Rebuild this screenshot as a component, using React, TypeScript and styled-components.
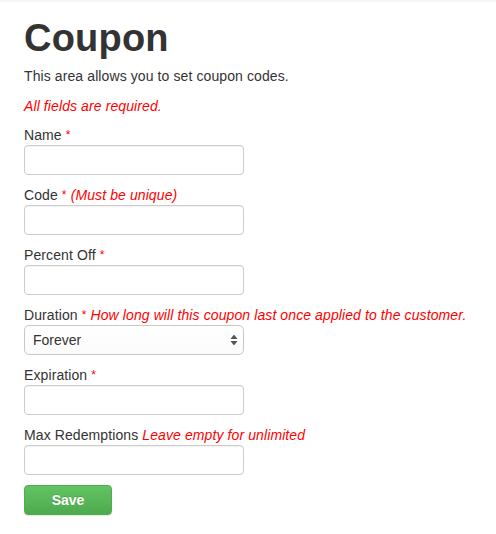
import React from "react";
import styled, { createGlobalStyle } from "styled-components";

const Global = createGlobalStyle`
  html, body { margin: 0; padding: 0; background: #fff; }
  body {
    font-family: "Liberation Sans", Arial, Helvetica, sans-serif;
    font-size: 14px;
    line-height: 20px;
    color: #333;
    letter-spacing: 0.1px;
  }
  * { box-sizing: border-box; }
`;

const Page = styled.div`
  min-height: 534px;
  padding: 0 24px;
  border-top: 2px solid #f6f6f6;
`;

const Title = styled.h1`
  margin: 16px 0 6px;
  font-size: 38px;
  line-height: 1.1;
  font-weight: 700;
  color: #333;
  letter-spacing: 0.2px;
`;

const Text = styled.p<{ $note?: boolean }>`
  margin: 0 0 ${(p) => (p.$note ? "9px" : "10px")};
  color: ${(p) => (p.$note ? "#f00" : "#333")};
  font-style: ${(p) => (p.$note ? "italic" : "normal")};
`;

const Form = styled.form`
  display: flex;
  flex-direction: column;
  gap: 10px;
`;

const Group = styled.div`
  display: flex;
  flex-direction: column;
`;

const Label = styled.label`
  display: block;
  height: 20px;
  font-weight: 400;
  white-space: nowrap;
`;

const Req = styled.span`
  color: #f00;
  font-size: 12px;
  vertical-align: 1px;
`;

const Hint = styled.em`
  color: #f00;
  font-style: italic;
`;

const Input = styled.input`
  width: 220px;
  height: 30px;
  padding: 5px 10px;
  border: 1px solid #ccc;
  border-radius: 4px;
  background: #fff;
  box-shadow: inset 0 1px 1px rgba(0, 0, 0, 0.05);
  font: inherit;
  outline: none;
`;

const SelectWrap = styled.div`
  position: relative;
  width: 220px;
  height: 30px;
`;

const Select = styled.select`
  appearance: none;
  -webkit-appearance: none;
  width: 220px;
  height: 30px;
  padding: 0 24px 0 8px;
  border: 1px solid #c8c8c8;
  border-radius: 5px;
  background: linear-gradient(#ffffff, #fbfbfb);
  font: inherit;
  color: #333;
  outline: none;
`;

const Arrows = styled.svg`
  position: absolute;
  right: 6px;
  top: 9px;
  pointer-events: none;
`;

const Save = styled.button`
  width: 88px;
  height: 30px;
  border: 1px solid #4cae4c;
  border-radius: 4px;
  background: linear-gradient(#62c462, #4fa94f);
  color: #fff;
  font: inherit;
  font-weight: 700;
  text-shadow: 0 -1px 0 rgba(0, 0, 0, 0.15);
  box-shadow: 0 1px 1px rgba(0, 0, 0, 0.1);
  padding: 0;
`;

export default function App() {
  return (
    <>
      <Global />
      <Page>
        <Title>Coupon</Title>
        <Text>This area allows you to set coupon codes.</Text>
        <Text $note>All fields are required.</Text>
        <Form onSubmit={(e) => e.preventDefault()}>
          <Group>
            <Label>
              Name <Req>*</Req>
            </Label>
            <Input type="text" />
          </Group>
          <Group>
            <Label>
              Code <Req>*</Req> <Hint>(Must be unique)</Hint>
            </Label>
            <Input type="text" />
          </Group>
          <Group>
            <Label>
              Percent Off <Req>*</Req>
            </Label>
            <Input type="text" />
          </Group>
          <Group>
            <Label>
              Duration <Req>*</Req>{" "}
              <Hint>How long will this coupon last once applied to the customer.</Hint>
            </Label>
            <SelectWrap>
              <Select defaultValue="forever">
                <option value="forever">Forever</option>
                <option value="once">Once</option>
                <option value="repeating">Repeating</option>
              </Select>
              <Arrows width="8" height="12" viewBox="0 0 8 12">
                <path d="M4 0.5 L7.5 5 L0.5 5 Z" fill="#555" />
                <path d="M4 11.5 L7.5 7 L0.5 7 Z" fill="#555" />
              </Arrows>
            </SelectWrap>
          </Group>
          <Group>
            <Label>
              Expiration <Req>*</Req>
            </Label>
            <Input type="text" />
          </Group>
          <Group>
            <Label>
              Max Redemptions <Hint>Leave empty for unlimited</Hint>
            </Label>
            <Input type="text" />
          </Group>
          <div>
            <Save type="submit">Save</Save>
          </div>
        </Form>
      </Page>
    </>
  );
}
